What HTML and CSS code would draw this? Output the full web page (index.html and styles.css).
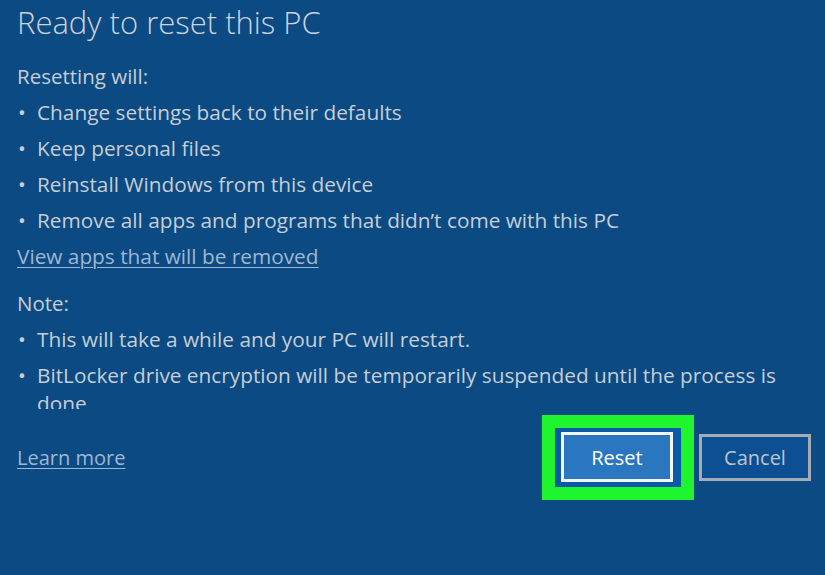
FILE: index.html
```html
<!DOCTYPE html>
<html lang="en">
<head>
<meta charset="utf-8">
<title>Ready to reset this PC</title>
<link rel="stylesheet" href="styles.css">
</head>
<body>
<div class="dialog">
  <div class="scroll">
    <h1 class="title">Ready to reset this PC</h1>
    <p class="label">Resetting will:</p>
    <ul class="list">
      <li>Change settings back to their defaults</li>
      <li>Keep personal files</li>
      <li>Reinstall Windows from this device</li>
      <li>Remove all apps and programs that didn’t come with this PC</li>
    </ul>
    <a class="link" href="#">View apps that will be removed</a>
    <p class="label note">Note:</p>
    <ul class="list">
      <li>This will take a while and your PC will restart.</li>
      <li class="wrap">BitLocker drive encryption will be temporarily suspended until the process is done</li>
    </ul>
  </div>
  <div class="footer">
    <a class="link" href="#">Learn more</a>
    <div class="buttons">
      <div class="highlight"><button class="btn primary">Reset</button></div>
      <button class="btn secondary">Cancel</button>
    </div>
  </div>
</div>
</body>
</html>
```
FILE: styles.css
```css
html, body {
  margin: 0;
  padding: 0;
  background: #0b4a82;
  height: 100%;
  overflow: hidden;
}
body {
  font-family: "Open Sans", "Noto Sans", "Liberation Sans", sans-serif;
  color: #c6ced7;
}
.dialog {
  padding: 0 14px 0 17px;
}
.scroll {
  height: 409px;
  overflow: hidden;
  margin-right: 26px;
}
.title {
  margin: 0;
  font-size: 31px;
  font-weight: 300;
  line-height: 44px;
  color: #cdd3da;
}
.label {
  margin: 14px 0 0;
  font-size: 20.5px;
  line-height: 36px;
}
.note {
  margin-top: 11px;
}
.list {
  margin: 0;
  padding: 0;
  list-style: none;
  font-size: 20.8px;
  line-height: 28px;
}
.list li {
  position: relative;
  padding: 4px 0 4px 20px;
}
.list li::before {
  content: "•";
  position: absolute;
  left: 1px;
  top: 4px;
}
.link {
  display: inline-block;
  font-size: 20.8px;
  line-height: 36px;
  color: #9fb7d2;
  text-decoration: underline;
  text-decoration-thickness: 1px;
  text-underline-offset: 3px;
}
.footer .link {
  font-size: 20px;
}
.footer {
  display: flex;
  align-items: center;
  justify-content: space-between;
  margin-top: 6px;
}
.buttons {
  display: flex;
  align-items: center;
  gap: 5px;
}
.highlight {
  border: 13px solid #1ef52e;
  background: #0b5aa8;
  padding: 4px 8px 5px 6px;
}
.btn {
  font-family: inherit;
  font-size: 20px;
  width: 112px;
  margin: 0;
  cursor: pointer;
  display: block;
}
.primary {
  height: 50px;
  background: #2a77bf;
  border: 3px solid #f4f7fa;
  color: #ffffff;
}
.secondary {
  height: 47px;
  background: #0c4f93;
  border: 3px solid #a4abb5;
  color: #bcc6d1;
}
```
